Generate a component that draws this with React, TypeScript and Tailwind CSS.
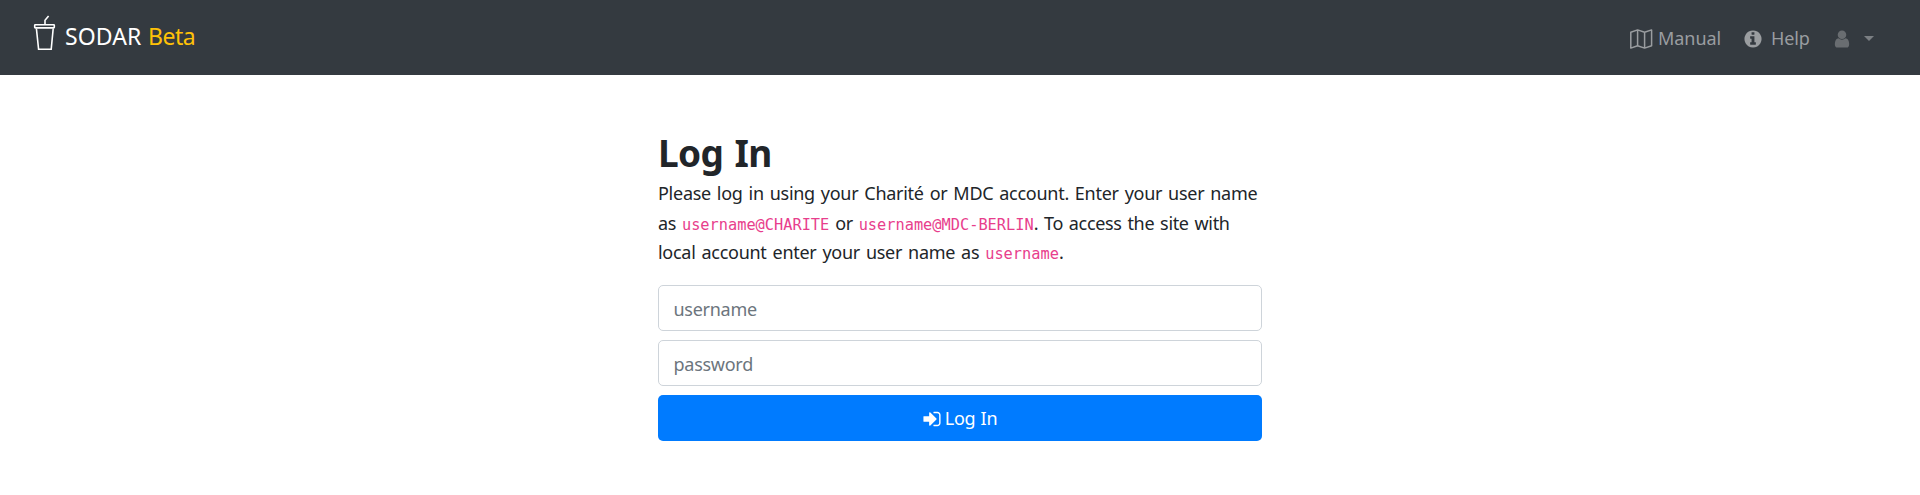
import type { ReactNode } from "react";

function Glyph({ path, className }: { path: string; className: string }) {
  return (
    <svg viewBox="0 0 1792 1792" fill="currentColor" className={className} aria-hidden="true">
      <path d={path} />
    </svg>
  );
}

const INFO =
  "M1152 1376v-160q0-14-9-23t-23-9h-96v-512q0-14-9-23t-23-9h-320q-14 0-23 9t-9 23v160q0 14 9 23t23 9h96v320h-96q-14 0-23 9t-9 23v160q0 14 9 23t23 9h448q14 0 23-9t9-23zm-128-896v-160q0-14-9-23t-23-9h-192q-14 0-23 9t-9 23v160q0 14 9 23t23 9h192q14 0 23-9t9-23zm640 416q0 209-103 385.5t-279.5 279.5-385.5 103-385.5-103-279.5-279.5-103-385.5 103-385.5 279.5-279.5 385.5-103 385.5 103 279.5 279.5 103 385.5z";
const USER =
  "M1536 1399q0 109-62.5 187t-150.5 78h-854q-88 0-150.5-78t-62.5-187q0-85 8.5-160.5t31.5-152 58.5-131 94-89 134.5-34.5q131 128 313 128t313-128q76 0 134.5 34.5t94 89 58.5 131 31.5 152 8.5 160.5zm-256-887q0 159-112.5 271.5t-271.5 112.5-271.5-112.5-112.5-271.5 112.5-271.5 271.5-112.5 271.5 112.5 112.5 271.5z";
const SIGN_IN =
  "M1312 896q0 26-19 45l-544 544q-19 19-45 19t-45-19-19-45v-288h-448q-26 0-45-19t-19-45v-384q0-26 19-45t45-19h448v-288q0-26 19-45t45-19 45 19l544 544q19 19 19 45zm352-352v704q0 119-84.5 203.5t-203.5 84.5h-320q-13 0-22.5-9.5t-9.5-22.5q0-4-1-20t-.5-26.5 3-23.5 10-19.5 20.5-6.5h320q66 0 113-47t47-113v-704q0-66-47-113t-113-47h-312l-11.5-1-11.5-3-8-5.5-7-9-2-13.5q0-4-1-20t-.5-26.5 3-23.5 10-19.5 20.5-6.5h320q119 0 203.5 84.5t84.5 203.5z";

function Code({ children }: { children: ReactNode }) {
  return (
    <code className="align-[0.5px] font-['DejaVu_Sans_Mono',monospace] text-[15.3px] leading-none tracking-normal text-[#e83e8c]">
      {children}
    </code>
  );
}

export default function App() {
  return (
    <div className="min-h-[495px] bg-white font-['Noto_Sans',sans-serif] text-[18px] text-[#212529]">
      <nav className="flex h-[75px] items-start justify-between bg-[#343a40] pr-[46px] pl-[32px]">
        <a className="flex h-[72px] items-center text-[23px] leading-[34px] text-white">
          <svg viewBox="0 0 24 36" className="mb-[6px] h-9 w-6" fill="none" stroke="currentColor" strokeWidth="1.6">
            <path d="M16.6 1 13 5.2V9.5" />
            <rect x="2.7" y="9.7" width="19.6" height="3.2" rx="0.6" />
            <path d="M4.4 13.5 6.6 34.3h12.6l2-20.8" />
          </svg>
          <span className="ml-[9px] w-[83px] tracking-[0.1px]">SODAR</span>
          <span className="tracking-[-0.5px] text-[#ffc107]">Beta</span>
        </a>
        <div className="flex h-[77px] items-center text-[#9a9da0]">
          <svg viewBox="0 0 24 20" className="h-5 w-6" fill="none" stroke="currentColor" strokeWidth="1.5" strokeLinejoin="round">
            <path d="M1.8 3.3 8.6.9l7 2.4 7-2.4v15.8l-7 2.4-7-2.4-6.8 2.4zM8.6.9v15.8M15.6 3.3v15.8" />
          </svg>
          <span className="ml-[5px] w-[64px] tracking-[-0.05px]">Manual</span>
          <Glyph path={INFO} className="ml-[21px] size-[20px]" />
          <span className="ml-[8px] w-[41px] tracking-[-0.1px]">Help</span>
          <Glyph path={USER} className="ml-[20px] size-[20px] text-[#696d71]" />
          <svg viewBox="0 0 10 5" className="ml-[12px] h-[5px] w-[10px] text-[#7b7f83]" fill="currentColor">
            <path d="M0 0h10L5 5z" />
          </svg>
        </div>
      </nav>

      <main className="mx-auto w-[604px] pt-[56px]">
        <h1 className="text-[37px] leading-[44px] font-bold tracking-[-0.6px] [word-spacing:2px]">Log In</h1>
        <p className="mt-[4px] leading-[29.5px] tracking-[-0.27px] whitespace-nowrap [word-spacing:1.5px]">
          Please log in using your Charité or MDC account. Enter your user name
          <br />
          <span className="tracking-[-0.33px]">
            as <Code>username@CHARITE</Code> or <Code>username@MDC-BERLIN</Code>. To access the site with
          </span>
          <br />
          local account enter your user name as <Code>username</Code>.
        </p>
        <form className="mt-[17px] flex flex-col gap-[9px]" onSubmit={(e) => e.preventDefault()}>
          <input
            type="text"
            placeholder="username"
            className="h-[46px] rounded-[5px] border border-[#ced4da] px-[14.5px] pt-[2px] tracking-[-0.27px] placeholder:text-[#6c757d]"
          />
          <input
            type="password"
            placeholder="password"
            className="h-[46px] rounded-[5px] border border-[#ced4da] px-[14.5px] pt-[2px] tracking-[-0.27px] placeholder:text-[#6c757d]"
          />
          <button type="submit" className="flex h-[46px] items-center justify-center rounded-[5px] bg-[#007bff] pt-[2px] pr-[1px] text-white">
            <Glyph path={SIGN_IN} className="size-[20px]" />
            <span className="ml-[3px] tracking-[-0.3px] [word-spacing:1px]">Log In</span>
          </button>
        </form>
      </main>
    </div>
  );
}
